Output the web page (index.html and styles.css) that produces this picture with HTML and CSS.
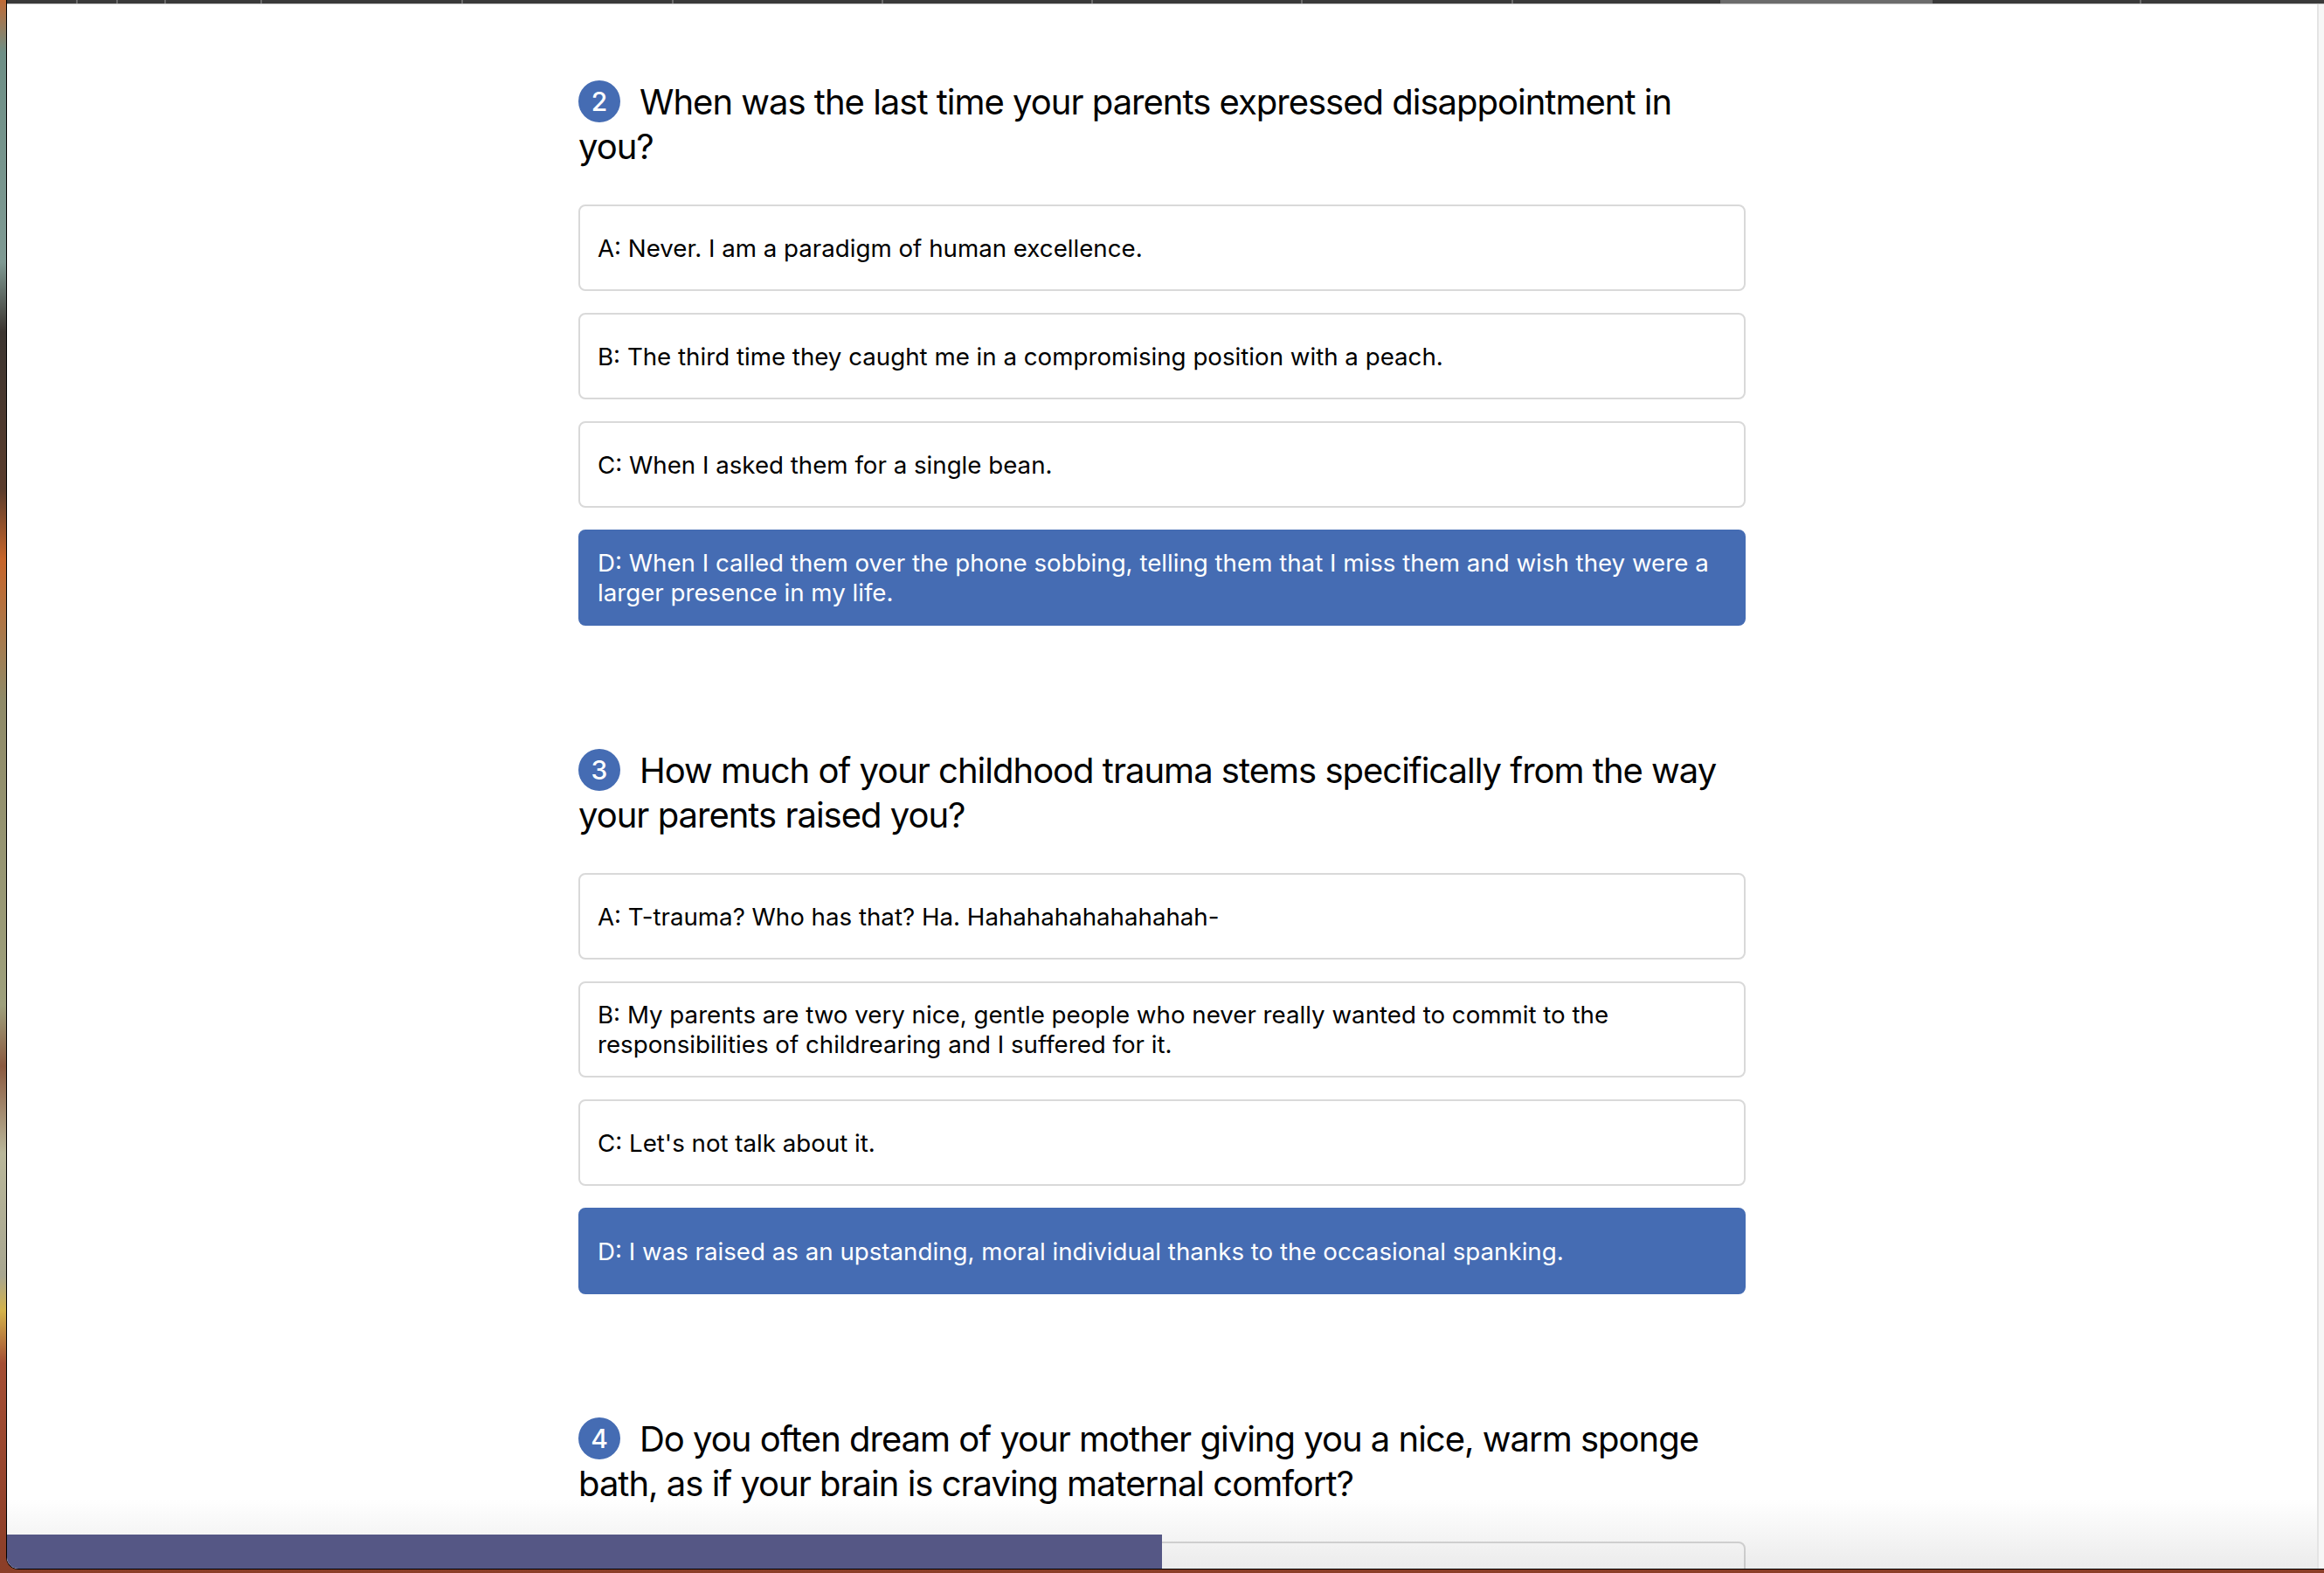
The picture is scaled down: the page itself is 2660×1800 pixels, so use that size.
FILE: index.html
```html
<!DOCTYPE html>
<html lang="en">
<head>
<meta charset="utf-8">
<title>Quiz</title>
<link rel="stylesheet" href="styles.css">
</head>
<body>
<div class="window">
  <div class="tabbar">
    <span class="tab" style="width:81px"></span>
    <span class="tab" style="width:46px"></span>
    <span class="tab" style="width:55px"></span>
    <span class="tab" style="width:110px"></span>
    <span class="tab" style="width:230px"></span>
    <span class="tab" style="width:241px"></span>
    <span class="tab" style="width:240px"></span>
    <span class="tab" style="width:240px"></span>
    <span class="tab" style="width:240px"></span>
    <span class="tab" style="width:241px"></span>
    <span class="tab" style="width:239px"></span>
    <span class="tab tab-active" style="width:241px"></span>
    <span class="tab" style="width:239px"></span>
    <span class="tab tab-last"></span>
  </div>
  <div class="tabline"></div>
  <div class="viewport">
    <main class="page">
      <div class="quiz">
        <section class="question">
          <h2 class="q-title"><span class="badge">2</span>When was the last time your parents expressed disappointment in you?</h2>
          <div class="options">
            <div class="option">A: Never. I am a paradigm of human excellence.</div>
            <div class="option">B: The third time they caught me in a compromising position with a peach.</div>
            <div class="option">C: When I asked them for a single bean.</div>
            <div class="option selected">D: When I called them over the phone sobbing, telling them that I miss them and wish they were a larger presence in my life.</div>
          </div>
        </section>
        <section class="question">
          <h2 class="q-title"><span class="badge">3</span>How much of your childhood trauma stems specifically from the way your parents raised you?</h2>
          <div class="options">
            <div class="option">A: T-trauma? Who has that? Ha. Hahahahahahahahah-</div>
            <div class="option">B: My parents are two very nice, gentle people who never really wanted to commit to the responsibilities of childrearing and I suffered for it.</div>
            <div class="option">C: Let's not talk about it.</div>
            <div class="option selected">D: I was raised as an upstanding, moral individual thanks to the occasional spanking.</div>
          </div>
        </section>
        <section class="question">
          <h2 class="q-title"><span class="badge">4</span>Do you often dream of your mother giving you a nice, warm sponge bath, as if your brain is craving maternal comfort?</h2>
          <div class="options">
            <div class="option"></div>
          </div>
        </section>
      </div>
      <div class="fade"></div>
      <div class="progress"><div class="progress-fill" style="width:50%"></div></div>
    </main>
    <div class="scrollbar"></div>
  </div>
</div>
</body>
</html>
```

FILE: styles.css
```css
html, body {
  margin: 0;
  padding: 0;
  height: 1800px;
  overflow: hidden;
}

body {
  background: linear-gradient(180deg,
    #c06a35 0px, #6e8f86 60px, #7f9a93 300px, #3c3530 380px,
    #5a3c2c 560px, #c7652a 640px, #8f8a68 800px, #9ea07c 1150px,
    #8b5a40 1220px, #b9b79a 1320px, #a8a690 1460px, #d4b34a 1500px,
    #a44e34 1560px, #8b3e28 1800px);
  font-family: Inter, "Noto Sans", "Liberation Sans", sans-serif;
  color: #111;
}

.window {
  margin-left: 7px;
  height: 1796px;
  border-left: 1px solid #000;
  border-bottom: 1px solid #000;
  border-bottom-left-radius: 14px;
  overflow: hidden;
  display: flex;
  flex-direction: column;
  background: #fff;
  box-sizing: border-box;
}

.tabbar {
  height: 4px;
  background: #3a3a3a;
  display: flex;
  flex-shrink: 0;
}

.tab {
  height: 4px;
  border-right: 2px solid #6a6a6a;
  box-sizing: border-box;
  flex-shrink: 0;
}

.tab-active {
  background: #6c6c6c;
}

.tab-last {
  flex: 1;
  border-right: none;
}

.tabline {
  height: 1px;
  background: #c9c9c9;
  flex-shrink: 0;
}

.viewport {
  flex: 1;
  display: flex;
  min-height: 0;
}

.page {
  flex: 1;
  position: relative;
  overflow: hidden;
  background: #fff;
}

.scrollbar {
  width: 6px;
  border-left: 2px solid #e4e4e4;
  background: #f6f6f6;
}

.quiz {
  width: 1336px;
  margin: 0 auto;
  padding-top: 86px;
  display: flex;
  flex-direction: column;
  gap: 140px;
}

.q-title {
  margin: 0 0 41px;
  font-size: 40px;
  line-height: 51px;
  font-weight: 400;
  color: #000;
  letter-spacing: -1px;
}

.badge {
  display: inline-block;
  width: 48px;
  height: 48px;
  line-height: 48px;
  text-align: center;
  border-radius: 50%;
  background: #456cb3;
  color: #fff;
  font-size: 30px;
  font-weight: 500;
  letter-spacing: 0;
  margin-right: 22px;
  margin-top: 1px;
  vertical-align: top;
}

.options {
  display: flex;
  flex-direction: column;
  gap: 25px;
}

.option {
  min-height: 99px;
  box-sizing: border-box;
  border: 2px solid #d9d9d9;
  border-radius: 8px;
  padding: 19px 20px;
  display: flex;
  align-items: center;
  font-size: 27.7px;
  line-height: 34px;
  color: #000;
  background: #fff;
}

.option.selected {
  background: #456cb3;
  border-color: #456cb3;
  color: #fff;
}

.fade {
  position: absolute;
  left: 0;
  right: 0;
  bottom: 0;
  height: 80px;
  background: linear-gradient(180deg, rgba(0, 0, 0, 0) 0%, rgba(0, 0, 0, 0.08) 100%);
  pointer-events: none;
}

.progress {
  position: absolute;
  left: 0;
  right: 0;
  bottom: 0;
  height: 39px;
}

.progress-fill {
  height: 100%;
  background: #555785;
}
```
